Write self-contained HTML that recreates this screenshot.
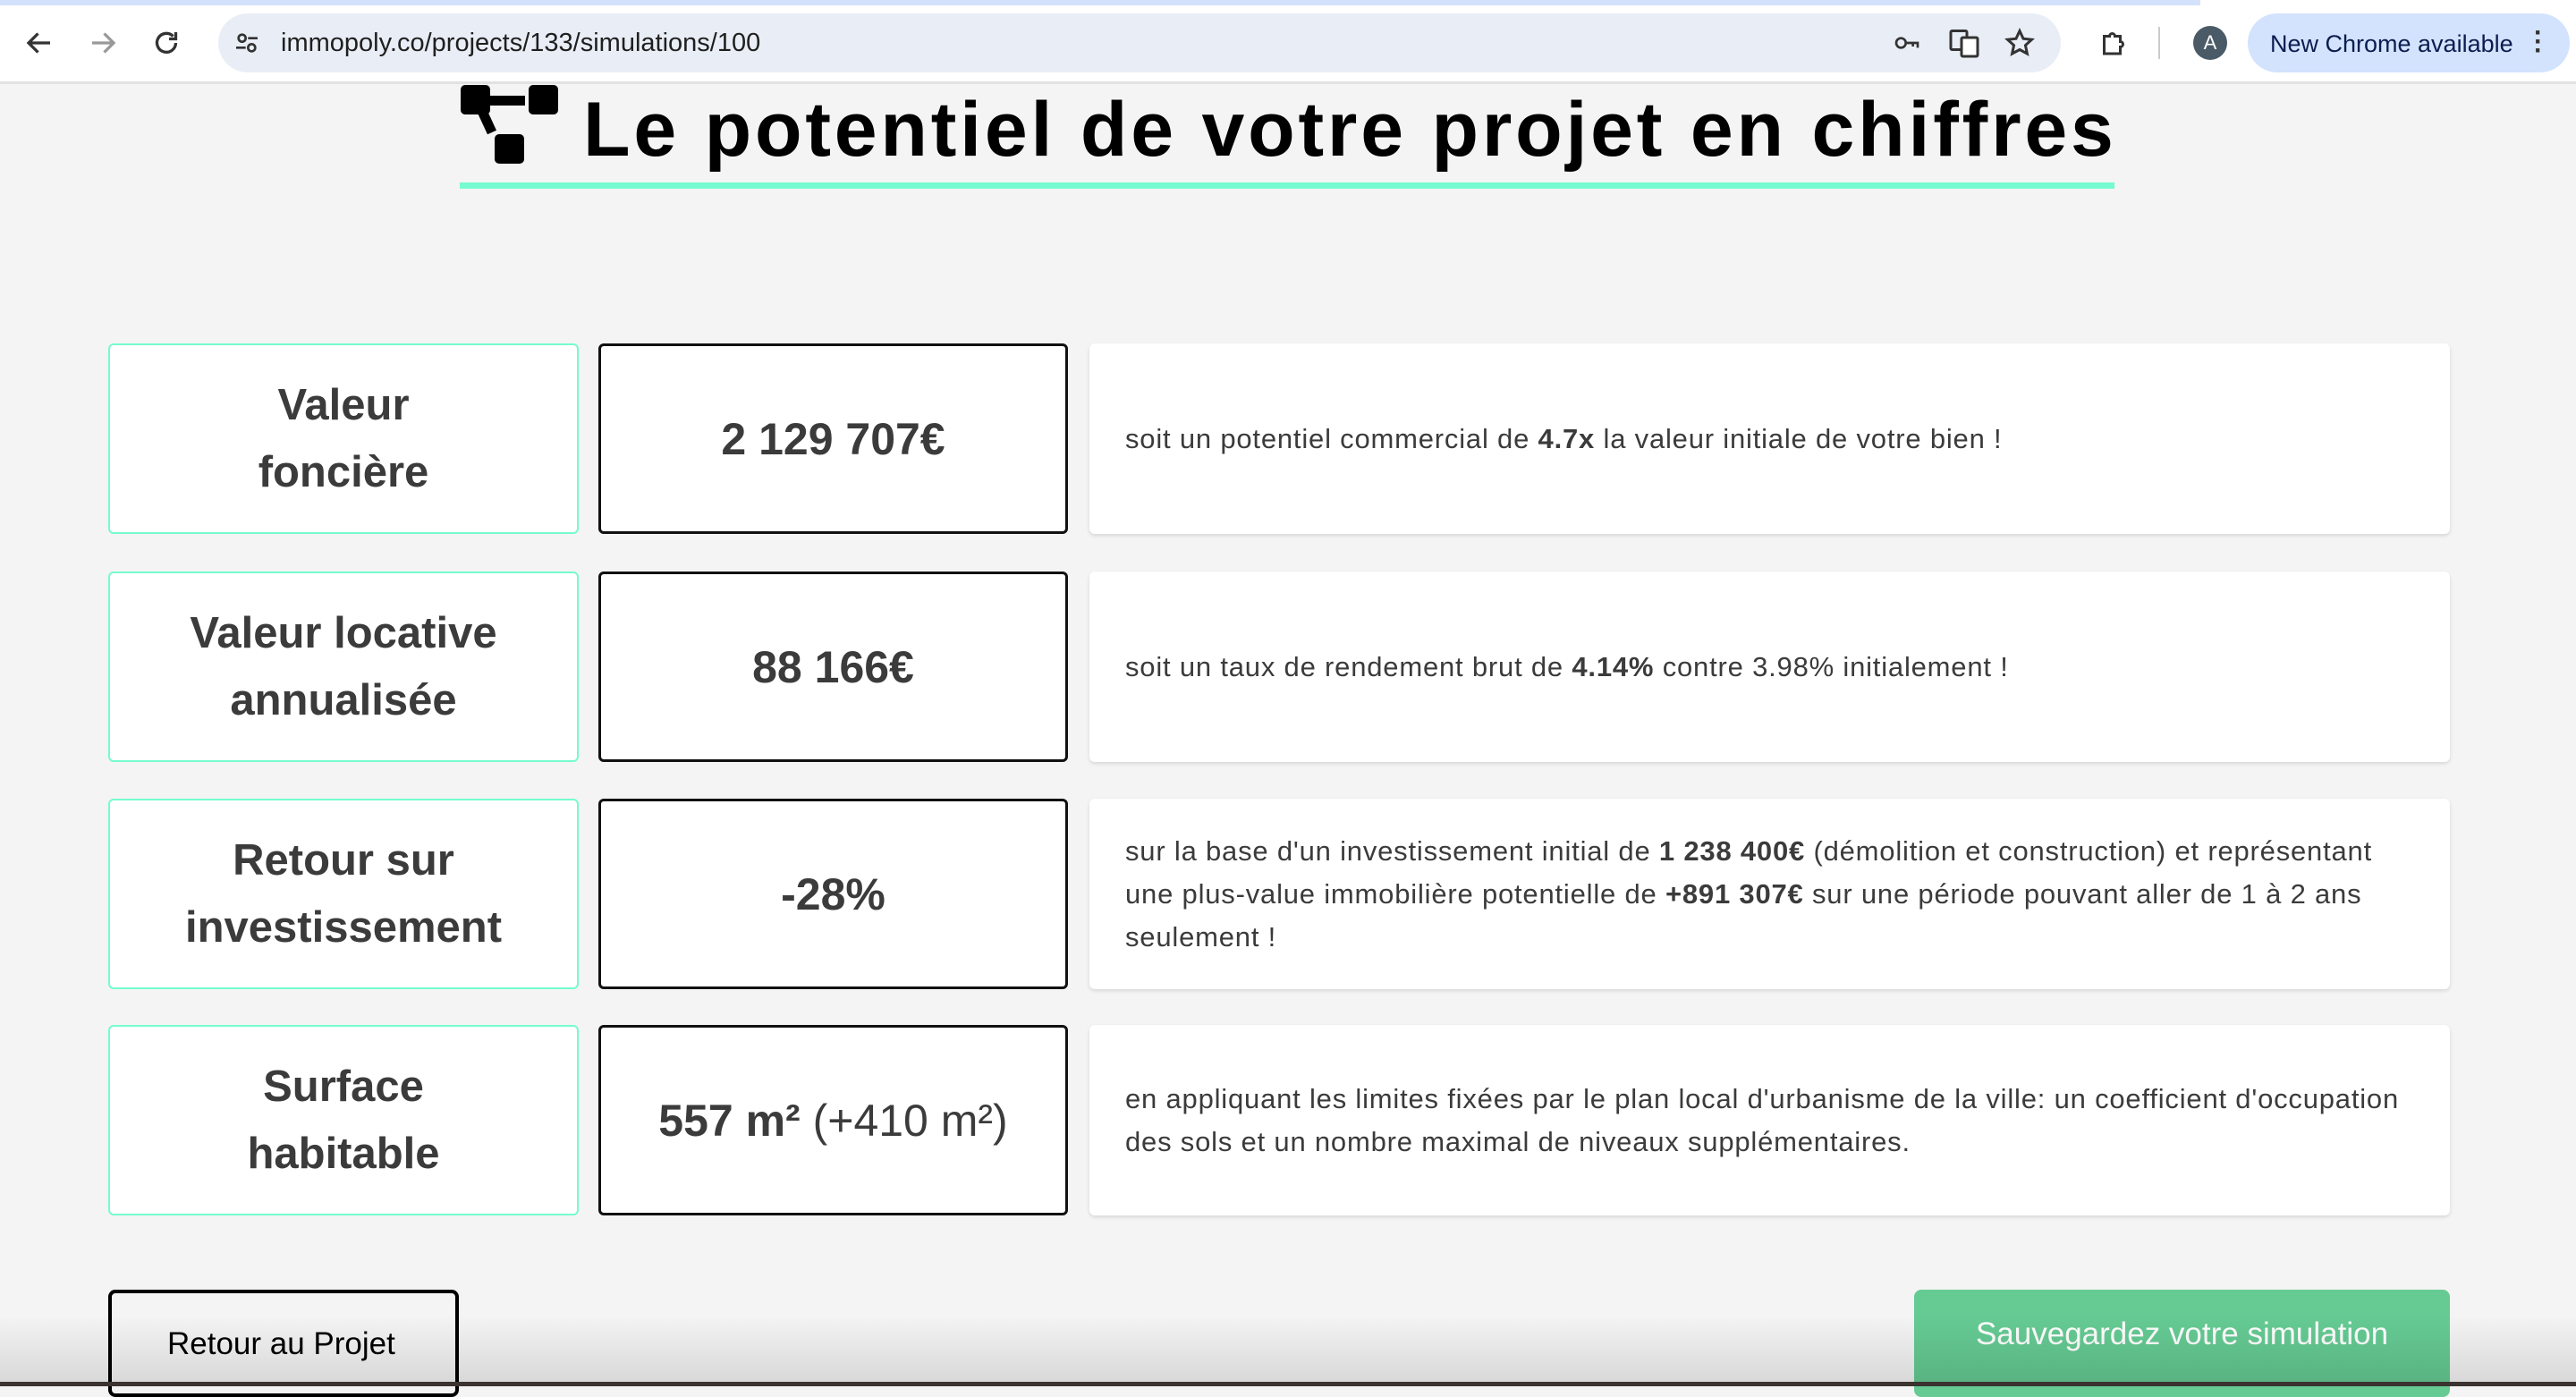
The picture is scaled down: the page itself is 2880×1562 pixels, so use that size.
<!DOCTYPE html>
<html><head><meta charset="utf-8"><style>
*{margin:0;padding:0;box-sizing:border-box}
body{width:2880px;height:1550px;overflow:hidden;background:#f4f4f4;font-family:"Liberation Sans",sans-serif;position:relative}
.top{position:absolute;left:0;top:0;width:2880px;height:94px;background:#fff;border-bottom:3px solid #e2e2e2}
.topline{position:absolute;left:0;top:0;width:2460px;height:6px;background:#d3e1fb}
.url{position:absolute;left:244px;top:15px;width:2060px;height:66px;border-radius:33px;background:#e9eef6}
.url span{position:absolute;left:70px;top:17px;font-size:29px;color:#1f1f1f}
.chip{position:absolute;left:2513px;top:15px;width:360px;height:66px;border-radius:33px;background:#d3e3fd;font-size:27px;color:#0b1d4f;padding:19px 0 0 25px}
h1{position:absolute;left:652px;top:96px;font-size:86px;font-weight:bold;color:#000;white-space:nowrap;letter-spacing:3.8px}
.ul{position:absolute;left:514px;top:204px;width:1850px;height:7px;background:#75fbd0}
.box{position:absolute;height:213px;background:#fff;border-radius:6px;display:flex;align-items:center;justify-content:center;text-align:center;color:#3b3b3b;font-weight:bold}
.lab{left:121px;width:526px;border:2px solid #75fbd0;font-size:49px;line-height:75px}
.val{left:669px;width:525px;border:3px solid #111;font-size:50px}
.desc{left:1218px;width:1521px;justify-content:flex-start;text-align:left;padding-left:40px;font-weight:normal;font-size:31px;letter-spacing:0.8px;line-height:48px;box-shadow:0 2px 4px rgba(0,0,0,.12);white-space:nowrap}
.desc b{font-weight:bold}
.btn1{position:absolute;left:121px;top:1442px;width:392px;height:120px;border:4px solid #000;border-radius:8px;font-size:35px;padding:37px 0 0 62px;color:#000}
.btn2{position:absolute;left:2140px;top:1442px;width:599px;height:120px;background:#65cb93;border-radius:8px;font-size:35px;color:#fff;text-align:center;padding-top:30px}
.shade{position:absolute;left:0;top:1470px;width:2880px;height:80px;background:linear-gradient(rgba(0,0,0,0),rgba(0,0,0,.12))}
</style></head><body>
<div class="top"><div class="topline"></div>
<svg style="position:absolute;left:26px;top:30px" width="36" height="36" viewBox="0 0 24 24"><path d="M20 12H5M11 5l-7 7 7 7" fill="none" stroke="#333" stroke-width="2.2"/></svg>
<svg style="position:absolute;left:97px;top:30px" width="36" height="36" viewBox="0 0 24 24"><path d="M4 12h15M13 5l7 7-7 7" fill="none" stroke="#999" stroke-width="2.2"/></svg>
<svg style="position:absolute;left:168px;top:30px" width="36" height="36" viewBox="0 0 24 24"><path d="M19 12a7 7 0 1 1-2-5M19 4v5h-5" fill="none" stroke="#333" stroke-width="2.2"/></svg>
<div class="url"><svg style="position:absolute;left:16px;top:17px" width="32" height="32" viewBox="0 0 24 24"><circle cx="8" cy="8" r="3" fill="none" stroke="#333" stroke-width="2"/><path d="M13 8h8M3 16h8" stroke="#333" stroke-width="2"/><circle cx="16" cy="16" r="3" fill="none" stroke="#333" stroke-width="2"/></svg><span>immopoly.co/projects/133/simulations/100</span>
<svg style="position:absolute;left:1870px;top:17px" width="36" height="32" viewBox="0 0 24 24"><circle cx="7" cy="12" r="4" fill="none" stroke="#333" stroke-width="2"/><path d="M11 12h10v4M17 12v3" fill="none" stroke="#333" stroke-width="2"/></svg>
<svg style="position:absolute;left:1934px;top:15px" width="36" height="36" viewBox="0 0 24 24"><rect x="2" y="3" width="12" height="14" rx="1" fill="none" stroke="#333" stroke-width="2"/><rect x="10" y="8" width="12" height="14" rx="1" fill="#fff" stroke="#333" stroke-width="2"/></svg>
<svg style="position:absolute;left:1996px;top:15px" width="36" height="36" viewBox="0 0 24 24"><path d="M12 3l2.7 5.8 6.3.7-4.7 4.3 1.3 6.2L12 17l-5.6 3 1.3-6.2L3 9.5l6.3-.7z" fill="none" stroke="#333" stroke-width="2"/></svg>
</div>
<svg style="position:absolute;left:2345px;top:30px" width="36" height="36" viewBox="0 0 24 24"><path d="M5 7h4a2 2 0 1 1 4 0h4v4a2 2 0 1 1 0 4v5H5z" fill="none" stroke="#333" stroke-width="2"/></svg>
<div style="position:absolute;left:2413px;top:30px;width:2px;height:36px;background:#ccc"></div>
<div style="position:absolute;left:2452px;top:29px;width:38px;height:38px;border-radius:50%;background:#4a5a66;color:#fff;font-size:22px;text-align:center;line-height:38px">A</div>
<div class="chip">New Chrome available</div>
<div style="position:absolute;left:2833px;top:32px;font-size:30px;font-weight:bold;color:#333;line-height:10px">·<br>·<br>·</div>
</div>
<svg style="position:absolute;left:514px;top:94px" width="112" height="90" viewBox="514 94 112 90"><rect x="515" y="95" width="33" height="33" rx="5"/><rect x="591" y="95" width="33" height="33" rx="5"/><rect x="553" y="150" width="33" height="33" rx="5"/><rect x="545" y="107" width="42" height="11"/><path d="M538 122l12 26" stroke="#000" stroke-width="11"/></svg>
<h1>Le potentiel de votre projet en chiffres</h1>
<div class="ul"></div>

<div class="box lab" style="top:384px">Valeur<br>foncière</div>
<div class="box val" style="top:384px">2 129 707€</div>
<div class="box desc" style="top:384px">soit un potentiel commercial de&nbsp;<b>4.7x</b>&nbsp;la valeur initiale de votre bien !</div>

<div class="box lab" style="top:639px">Valeur locative<br>annualisée</div>
<div class="box val" style="top:639px">88 166€</div>
<div class="box desc" style="top:639px">soit un taux de rendement brut de&nbsp;<b>4.14%</b>&nbsp;contre 3.98% initialement !</div>

<div class="box lab" style="top:893px">Retour sur<br>investissement</div>
<div class="box val" style="top:893px">-28%</div>
<div class="box desc" style="top:893px"><div>sur la base d'un investissement initial de <b>1 238 400€</b> (démolition et construction) et représentant<br>une plus-value immobilière potentielle de <b>+891 307€</b> sur une période pouvant aller de 1 à 2 ans<br>seulement !</div></div>

<div class="box lab" style="top:1146px">Surface<br>habitable</div>
<div class="box val" style="top:1146px;font-weight:normal"><span><b>557 m²</b> (+410 m²)</span></div>
<div class="box desc" style="top:1146px"><div>en appliquant les limites fixées par le plan local d'urbanisme de la ville: un coefficient d'occupation<br>des sols et un nombre maximal de niveaux supplémentaires.</div></div>

<div class="btn1">Retour au Projet</div>
<div class="btn2">Sauvegardez votre simulation</div>
<div class="shade"></div>
<div style="position:absolute;left:0;top:1545px;width:2880px;height:5px;background:#3a3330"></div>
</body></html>
